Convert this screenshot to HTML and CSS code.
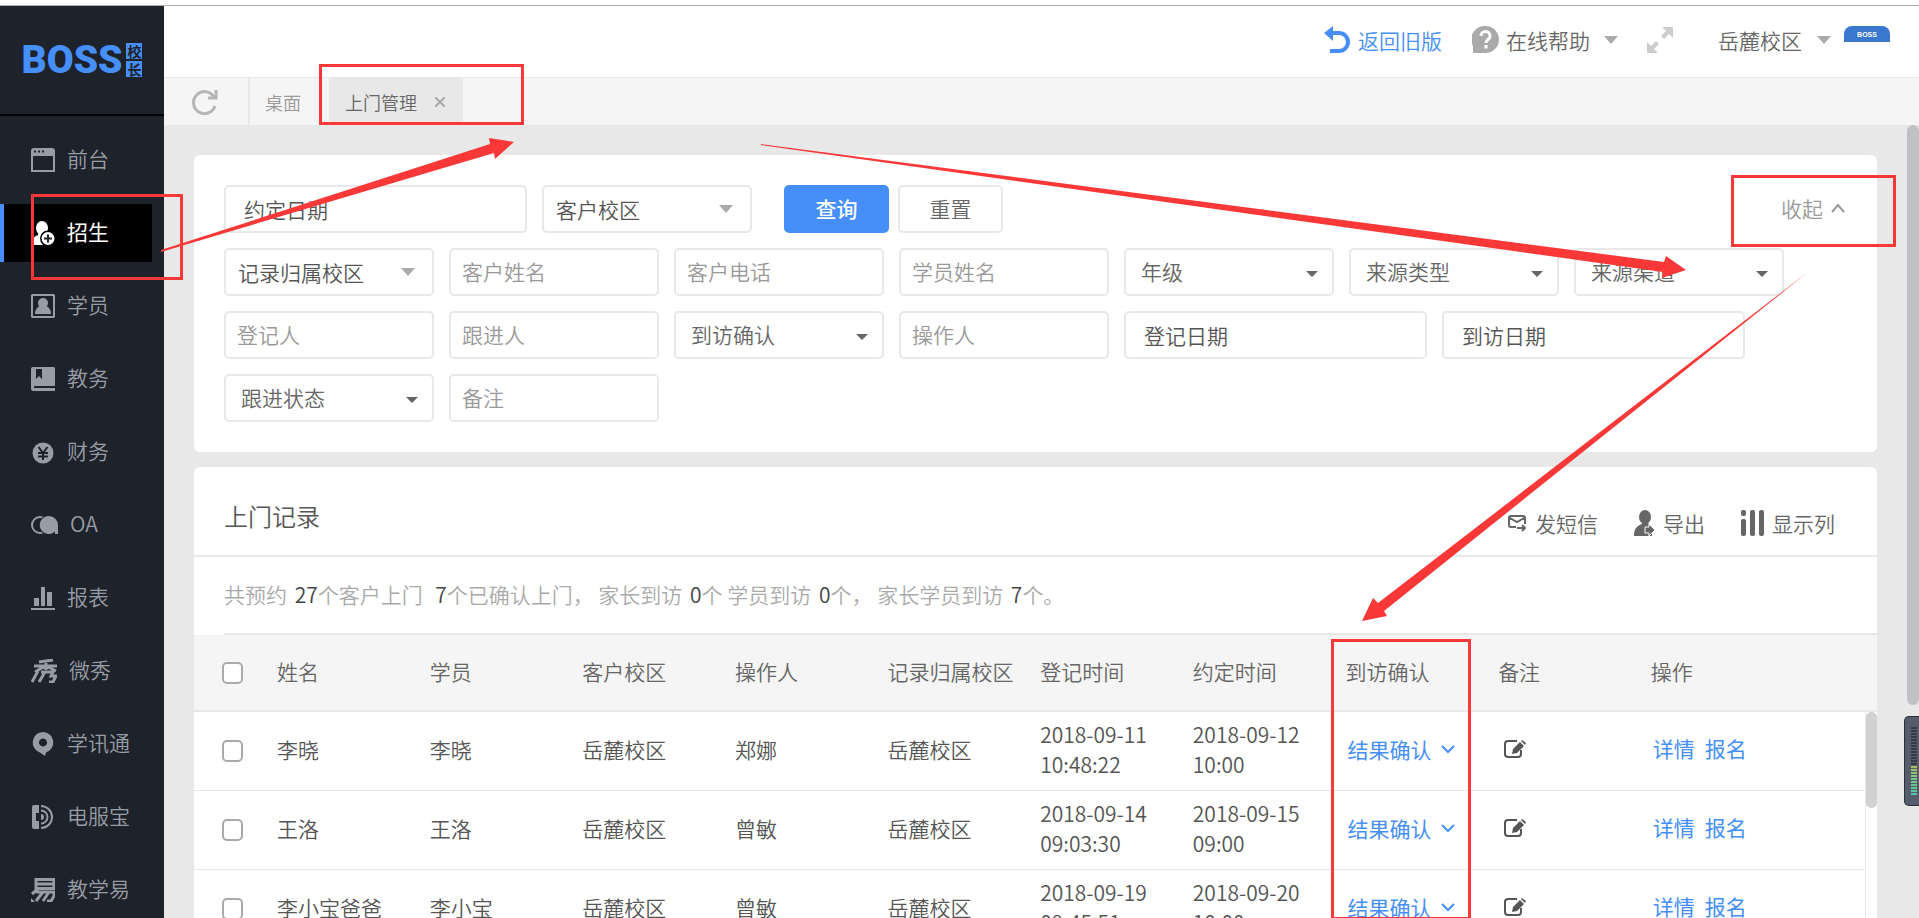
FILE: index.html
```
<!DOCTYPE html>
<html lang="zh-CN">
<head>
  <meta charset="UTF-8" />
  <meta name="viewport" content="width=device-width, initial-scale=1.0" />
  <title>BOSS校长 - 上门管理</title>
  <link rel="stylesheet" href="styles.css">
</head>
<body>
  <div class="app">
    <aside class="sidebar">
      <a class="logo" href="#">
        <span class="logo-name">BOSS</span>
        <span class="logo-sub"><i>校</i><i>长</i></span>
      </a>
      <nav class="menu">
        <a href="#"><svg width="24" height="24" viewBox="0 0 24 24"><path fill-rule="evenodd" d="M3 0h18a3 3 0 0 1 3 3v21H0V3a3 3 0 0 1 3-3zM2 8v14h20V8zM3 2.500h2v2H3zm4 0h2v2H7zm4 0h2v2h-2z"/></svg>前台</a>
        <a href="#" class="active"><svg width="24" height="24" viewBox="0 0 24 24"><ellipse cx="11" cy="7" rx="6" ry="7"/><path d="M7 12h8l2 3v9H0c0-5 2-8 7-10z"/><circle cx="17" cy="17.500" r="8" class="hole"/><circle cx="17" cy="17.500" r="6.500"/><path d="M17 13.500v8M13 17.500h8" class="cut"/></svg>招生</a>
        <a href="#"><svg width="24" height="24" viewBox="0 0 24 24"><path fill-rule="evenodd" d="M1 0h22l1 1v22l-1 1H1l-1-1V1zM2 2v20h20V2z"/><circle cx="12" cy="9" r="5"/><path d="M9 12h6c3 1 5 4 5 8H4c0-4 2-7 5-8z"/></svg>学员</a>
        <a href="#"><svg width="24" height="24" viewBox="0 0 24 24"><path fill-rule="evenodd" d="M2 0h21l1 1v18H3v2h21v3H2a2 2 0 0 1-2-2V2a2 2 0 0 1 2-2zM5 2v10l3-3 3 3V2z"/></svg>教务</a>
        <a href="#"><svg width="24" height="24" viewBox="0 0 24 24"><circle cx="12" cy="13" r="10.500"/><path d="M7.500 7l4.500 6 4.500-6M7 13h10M7 16.500h10M12 13v7" class="cut"/></svg>财务</a>
        <a href="#"><svg width="27" height="24" viewBox="0 0 27 24"><circle cx="9" cy="12" r="8" class="line"/><circle cx="17" cy="12" r="9.500" class="hole"/><path d="M18 3a9 9 0 0 1 9 9v9h-3v-2.500A9 9 0 1 1 18 3z"/></svg>OA</a>
        <a href="#"><svg width="24" height="24" viewBox="0 0 24 24"><path d="M3 12h5v8H3zM10 1h4v19h-4zM16 6h5v14h-5zM0 22h24v2H0z"/></svg>报表</a>
        <a href="#"><svg width="26" height="24" viewBox="0 0 26 24"><path d="M8 3l14-2M3 7h23M15 2v9M14 7L4 13M15 7l10 5M7 12L1 23M10 13h12l-2 4h5l-3 6h-4M14 13L8 23" class="line bold"/></svg>微秀</a>
        <a href="#"><svg width="24" height="24" viewBox="0 0 24 24"><path fill-rule="evenodd" d="M12 0a10.500 10.500 0 0 1 3 20.500L14 24l-5-3.500A10.500 10.500 0 0 1 12 0zm0 6.500a4 4 0 1 0 .01 0z"/></svg>学讯通</a>
        <a href="#"><svg width="24" height="24" viewBox="0 0 24 24"><path d="M3 0h5v8H5v8h3v8H3a2 2 0 0 1-2-2V2a2 2 0 0 1 2-2z"/><path d="M10 1a11 11 0 0 1 0 22M10 5.500a6.500 6.500 0 0 1 0 13" class="line"/><path d="M10 9a3 3 0 0 1 0 6z"/></svg>电服宝</a>
        <a href="#"><svg width="24" height="24" viewBox="0 0 24 24"><path d="M5 1.500h18v9H5zM5 6h17M8 10l-7 6M5 14h18v4l-3 5h-4M12 14L5 23M18 14l-6 9" class="line bold"/><path d="M0 20l4 4H0z"/></svg>教学易</a>
      </nav>
    </aside>

    <div class="main">
      <header class="topbar">
        <a class="back" href="#"><svg width="27" height="28" viewBox="0 0 27 28"><path d="M8 7h7a9 9 0 0 1 0 18H6" fill="none" stroke="currentColor" stroke-width="4"/><path d="M9 0v15L0 7z"/></svg>返回旧版</a>
        <button class="top-btn help"><svg width="27" height="28" viewBox="0 0 27 28"><path fill="#aaa" d="M13.500 0a13.500 13.500 0 0 1 0 27H1V20A13.500 13.500 0 0 1 13.500 0z"/><path d="M9 10c0-6 9-6 9 0 0 4-4 3-4 7M14 19v3.500" fill="none" stroke="#fff" stroke-width="3"/></svg>在线帮助<span class="caret"></span></button>
        <button class="top-btn expand" aria-label="全屏"><svg width="26" height="26" viewBox="0 0 26 26" fill="#ccc"><path d="M15 0h11v11l-4-4-5 5-3-3 5-5zM0 26V15l4 4 5-5 3 3-5 5 4 4z"/></svg></button>
        <button class="top-btn campus">岳麓校区<span class="caret"></span></button>
        <span class="avatar">BOSS</span>
      </header>

      <div class="tabs">
        <button class="refresh" aria-label="刷新"><svg width="26" height="26" viewBox="0 0 26 26" fill="none" stroke="#b5b5b5" stroke-width="3"><path d="M23 17a11 11 0 1 1-1-9"/><path d="M24 1v8h-8"/></svg></button>
        <a class="tab" href="#">桌面</a>
        <a class="tab current" href="#">上门管理<svg width="10" height="10" viewBox="0 0 10 10"><path d="M0 0l10 10M10 0L0 10" stroke="#aaa" stroke-width="2"/></svg></a>
      </div>

      <main class="content">
        <form class="card filters">
          <div class="filter-row">
            <input class="field date" type="text" value="约定日期" aria-label="约定日期">
            <span class="select soft"><select aria-label="客户校区"><option>客户校区</option></select></span>
            <button type="button" class="btn primary">查询</button>
            <button type="button" class="btn">重置</button>
            <button type="button" class="collapse">收起<svg width="14" height="10" viewBox="0 0 14 10"><path d="M1 9l6-7 6 7" fill="none" stroke="currentColor" stroke-width="2"/></svg></button>
          </div>
          <div class="filter-row">
            <span class="select soft"><select aria-label="记录归属校区"><option>记录归属校区</option></select></span>
            <input class="field" type="text" placeholder="客户姓名" aria-label="客户姓名">
            <input class="field" type="text" placeholder="客户电话" aria-label="客户电话">
            <input class="field" type="text" placeholder="学员姓名" aria-label="学员姓名">
            <span class="select"><select aria-label="年级"><option>年级</option></select></span>
            <span class="select"><select aria-label="来源类型"><option>来源类型</option></select></span>
            <span class="select"><select aria-label="来源渠道"><option>来源渠道</option></select></span>
          </div>
          <div class="filter-row">
            <input class="field" type="text" placeholder="登记人" aria-label="登记人">
            <input class="field" type="text" placeholder="跟进人" aria-label="跟进人">
            <span class="select"><select aria-label="到访确认"><option>到访确认</option></select></span>
            <input class="field" type="text" placeholder="操作人" aria-label="操作人">
            <input class="field date" type="text" value="登记日期" aria-label="登记日期">
            <input class="field date" type="text" value="到访日期" aria-label="到访日期">
          </div>
          <div class="filter-row">
            <span class="select"><select aria-label="跟进状态"><option>跟进状态</option></select></span>
            <input class="field" type="text" placeholder="备注" aria-label="备注">
          </div>
        </form>

        <section class="card records">
          <div class="records-head">
            <h2>上门记录</h2>
            <div class="tools">
              <button><svg width="19" height="20" viewBox="0 0 19 20" fill="none" stroke="currentColor" stroke-width="2"><path d="M8 14H3a2 2 0 0 1-2-2V5a2 2 0 0 1 2-2h12a2 2 0 0 1 2 2v6M2 5l7 4 7-4M9 15h8M14 12l3 3-3 3"/></svg>发短信</button>
              <button><svg width="21" height="26" viewBox="0 0 21 26"><ellipse cx="11" cy="7" rx="6" ry="7"/><path d="M8 12h6l1 3 3 2v9H0c0-6 2-10 8-12z"/><path d="M11 17h4v-3l6 6-6 6v-3h-4z" stroke="#fff"/></svg>导出</button>
              <button><svg width="23" height="26" viewBox="0 0 23 26"><rect width="5" height="6" rx="2"/><rect y="9" width="5" height="17" rx="2"/><rect x="9" width="5" height="26" rx="2"/><rect x="18" width="5" height="26" rx="2"/></svg>显示列</button>
            </div>
          </div>
          <p class="summary">共预约 <b>27</b>个客户上门&nbsp; <b>7</b>个已确认上门， 家长到访 <b>0</b>个 学员到访 <b>0</b>个， 家长学员到访 <b>7</b>个。</p>
          <div class="table-wrap">
            <table>
              <thead>
                <tr>
                  <th class="check"><input type="checkbox" aria-label="全选"></th>
                  <th>姓名</th><th>学员</th><th>客户校区</th><th>操作人</th><th>记录归属校区</th>
                  <th>登记时间</th><th>约定时间</th><th>到访确认</th><th>备注</th><th class="ops">操作</th>
                </tr>
              </thead>
              <tbody id="rows"></tbody>
            </table>
            <div class="inner-scroll"><span></span></div>
          </div>
        </section>
        <div class="page-scroll"></div>
      </main>
    </div>
  </div>

  <div class="meter"><span class="idle"></span><span class="level"></span></div>

  <div class="mark mark-menu"></div>
  <div class="mark mark-tab"></div>
  <div class="mark mark-collapse"></div>
  <div class="mark mark-confirm"></div>
  <svg class="arrows" width="1919" height="918" viewBox="0 0 1919 918" fill="#fb3838">
    <path d="M161 250L490 144L489 138L514 142L495 159L494 153L161 252Z"/>
    <path d="M761 144L1664 262L1666 256L1686 270L1662 278L1663 272L761 145Z"/>
    <path d="M1808 272L1384 611L1387 616L1362 621L1373 598L1378 603Z"/>
  </svg>

  <script>
    const visits = [
      ['李晓', '李晓', '郑娜', '2018-09-11', '10:48:22', '2018-09-12', '10:00'],
      ['王洛', '王洛', '曾敏', '2018-09-14', '09:03:30', '2018-09-15', '09:00'],
      ['李小宝爸爸', '李小宝', '曾敏', '2018-09-19', '09:45:51', '2018-09-20', '10:00']
    ];

    document.getElementById('rows').innerHTML = visits.map(v => `
      <tr>
        <td class="check"><input type="checkbox" aria-label="选择${v[0]}"></td>
        <td>${v[0]}</td><td>${v[1]}</td><td>岳麓校区</td><td>${v[2]}</td><td>岳麓校区</td>
        <td>${v[3]}<br>${v[4]}</td><td>${v[5]}<br>${v[6]}</td>
        <td><button class="confirm">结果确认<svg width="14" height="9" viewBox="0 0 14 9"><path d="M1 1l6 6 6-6" fill="none" stroke="currentColor" stroke-width="2"/></svg></button></td>
        <td><button class="edit" aria-label="编辑备注"><svg width="22" height="20" viewBox="0 0 22 20"><path d="M13 2H4a3 3 0 0 0-3 3v10a3 3 0 0 0 3 3h10a3 3 0 0 0 3-3v-4" fill="none" stroke="currentColor" stroke-width="2"/><path d="M8 15l1-5 7-7 4 4-7 7zM17 2l1-1 4 3-1 2z"/></svg></button></td>
        <td class="ops"><a href="#">详情</a><a href="#">报名</a></td>
      </tr>`).join('');
  </script>
</body>
</html>
```
FILE: styles.css
```
* {
  box-sizing: border-box;
}

body {
  margin: 0;
  height: 100vh;
  overflow: hidden;
  background: #fff;
  color: #555;
  font-family: "Noto Sans CJK SC", sans-serif;
  font-size: 21px;
  font-weight: 350;
  line-height: 30px;
}

button, input, select {
  font: inherit;
  color: inherit;
}

button {
  display: flex;
  align-items: center;
  padding: 0;
  border: 0;
  background: none;
}

a {
  color: inherit;
  text-decoration: none;
}

svg {
  display: block;
  flex: none;
}

svg:not([fill]) {
  fill: currentColor;
}

.app {
  display: flex;
  height: 100vh;
  margin-top: 5px;
  border-top: 1px solid #b0b0b0;
}

/* sidebar */
.sidebar {
  width: 164px;
  flex: none;
  background: #1e222a;
  color: #989ca5;
}

.logo {
  display: flex;
  align-items: center;
  justify-content: center;
  gap: 4px;
  height: 110px;
  border-bottom: 2px solid #000;
  color: #468ff9;
}

.logo-name {
  font: 900 39px/34px Roboto, sans-serif;
}

.logo-sub {
  display: grid;
  gap: 2px;
}

.logo-sub i {
  width: 16px;
  height: 16px;
  background: #468ff9;
  color: #1e222a;
  font: bold 14px/16px "Noto Sans CJK SC", sans-serif;
  text-align: center;
}

.menu {
  display: grid;
  gap: 15px;
  padding-top: 15px;
}

.menu a {
  display: flex;
  align-items: center;
  gap: 12px;
  width: 152px;
  height: 58px;
  padding: 0 0 5px 27px;
  border-left: 4px solid transparent;
}

.menu svg {
  margin-top: 5px;
}

.menu .active {
  background: #000;
  border-color: #468ff9;
  color: #fff;
  font-weight: 400;
}

.menu .line {
  fill: none;
  stroke: currentColor;
  stroke-width: 2;
}

.menu .bold {
  stroke-width: 3;
}

.menu .cut {
  fill: none;
  stroke: #1e222a;
  stroke-width: 2;
}

.menu .hole {
  fill: #1e222a;
}

.menu .active .hole {
  fill: #000;
}

/* top bar */
.main {
  display: flex;
  flex-direction: column;
  flex: 1;
  min-width: 0;
}

.topbar {
  display: flex;
  flex: none;
  align-items: center;
  justify-content: flex-end;
  height: 72px;
  padding: 0 29px 3px 0;
  border-bottom: 1px solid #e8e8e8;
  color: #666;
}

.back {
  display: flex;
  align-items: center;
  gap: 7px;
  margin-right: 30px;
  color: #468ff9;
}

.top-btn {
  gap: 7px;
}

.caret {
  margin-left: 7px;
  border: 7px solid transparent;
  border-top: 8px solid #aaa;
  border-bottom: 0;
}

.campus .caret {
  margin-left: 8px;
}

.expand {
  margin: 0 45px 0 29px;
}

.avatar {
  align-self: flex-start;
  width: 46px;
  height: 16px;
  margin: 20px 0 0 13px;
  border-radius: 8px 8px 0 0;
  background: #3a78d0;
  color: #fff;
  font: bold 7px/18px "Liberation Sans", sans-serif;
  text-align: center;
}

.tabs {
  display: flex;
  flex: none;
  height: 47px;
  background: #f5f5f5;
  color: #999;
  font-size: 18px;
}

.refresh {
  width: 86px;
  padding-left: 28px;
  border-right: 2px solid #e8e8e8;
}

.tab {
  display: flex;
  align-items: center;
  height: 47px;
  padding: 0 15px;
}

.current {
  gap: 18px;
  margin-left: 13px;
  padding: 0 18px 0 16px;
  background: #e8e8e8;
  color: #666;
}

/* content */
.content {
  position: relative;
  flex: 1;
  padding: 30px 42px 0 30px;
  background: #e8e8e8;
}

.card {
  border-radius: 6px;
  background: #fff;
}

.filters {
  display: grid;
  gap: 15px;
  padding: 30px;
  margin-bottom: 15px;
}

.filter-row {
  display: flex;
  gap: 15px;
}

.field, .select {
  width: 210px;
  height: 48px;
  border: 2px solid #e8e8e8;
  border-radius: 5px;
  background: #fff;
}

.field {
  padding: 0 11px 3px;
}

.field::placeholder {
  color: #999;
  opacity: 1;
}

.date {
  width: 303px;
  padding: 0 18px;
}

.select {
  display: grid;
  align-items: center;
  color: #666;
}

.select select, .select::after {
  grid-area: 1 / 1;
}

.select select {
  appearance: none;
  width: 100%;
  height: 100%;
  padding: 0 0 3px 15px;
  border: 0;
  background: none;
}

.select::after {
  content: "";
  justify-self: end;
  margin: 4px 14px 0 0;
  border: 6px solid transparent;
  border-top-color: #666;
  border-bottom: 0;
  pointer-events: none;
}

.soft {
  color: #555;
}

.soft select {
  padding: 0 0 0 12px;
}

.soft::after {
  margin: 0 17px 0 0;
  border-width: 8px 7px 0;
  border-top-color: #aaa;
}

.btn {
  justify-content: center;
  width: 105px;
  height: 48px;
  padding-bottom: 3px;
  border: 2px solid #e8e8e8;
  border-radius: 5px;
  color: #666;
}

.primary {
  margin: 0 -6px 0 17px;
  border-color: #468ff9;
  background: #468ff9;
  color: #fff;
  font-weight: 500;
}

.collapse {
  gap: 8px;
  margin-left: auto;
  padding: 0 2px 2px 0;
  color: #999;
}

/* records */
.records-head {
  display: flex;
  justify-content: space-between;
  height: 90px;
  padding: 0 42px 0 30px;
  border-bottom: 2px solid #e8e8e8;
}

.records-head h2 {
  margin: 0;
  font-size: 24px;
  font-weight: 350;
  line-height: 98px;
}

.tools {
  display: flex;
  gap: 36px;
  padding-top: 24px;
  color: #666;
}

.tools button {
  gap: 8px;
}

.summary {
  height: 78px;
  margin: 0 0 0 30px;
  border-bottom: 2px solid #e8e8e8;
  color: #aaa;
  line-height: 74px;
}

.summary b {
  margin-left: 3px;
  color: #444;
  font-weight: 350;
}

.table-wrap {
  position: relative;
}

table {
  width: 100%;
  border-collapse: collapse;
  table-layout: fixed;
}

th, td {
  width: 9.07%;
  padding: 0 0 3px 15px;
  text-align: left;
  white-space: nowrap;
}

th {
  height: 76px;
  border-bottom: 2px solid #e8e8e8;
  background: #f5f5f5;
  color: #666;
  font-weight: 350;
}

td {
  height: 79px;
  border-bottom: 1px solid #e8e8e8;
}

th.check, td.check {
  width: 68px;
  padding: 0 0 0 28px;
}

th.ops {
  width: auto;
}

.check input {
  appearance: none;
  display: block;
  width: 21px;
  height: 22px;
  margin: 0;
  border: 2px solid #aaa;
  border-radius: 5px;
  background: #fff;
}

.confirm {
  gap: 10px;
  margin-left: 2px;
  color: #468ff9;
  font-weight: 400;
}

.edit {
  margin-left: 6px;
}

td.ops {
  padding-bottom: 6px;
}

.ops a {
  margin: 0 8px 0 2px;
  color: #468ff9;
  font-weight: 400;
}

.inner-scroll {
  position: absolute;
  top: 77px;
  right: 0;
  bottom: 0;
  width: 12px;
  border-left: 1px solid #e8e8e8;
  background: #fff;
}

.inner-scroll span {
  display: block;
  height: 96px;
  border-radius: 5px;
  background: #d0d1d3;
}

.page-scroll {
  position: absolute;
  top: 0;
  right: 0;
  width: 12px;
  height: 580px;
  border-radius: 6px;
  background: #c0c1c5;
}

/* level meter docked to the window edge */
.meter {
  position: absolute;
  top: 716px;
  right: 0;
  display: grid;
  align-content: center;
  width: 15px;
  height: 90px;
  padding-left: 6px;
  border: 1px solid #2b303c;
  border-right: 0;
  border-radius: 5px 0 0 5px;
  background: #555c6c;
}

.meter span {
  width: 6px;
  height: 39px;
  background: repeating-linear-gradient(#353a47 0 2px, #555c6c 2px 3px);
}

.meter .level {
  height: 30px;
  background: repeating-linear-gradient(transparent 0 2px, #555c6c 2px 3px), linear-gradient(#a8c060, #48c8b0);
}

/* annotations */
.mark {
  position: absolute;
  border: 3px solid #fb3838;
}

.mark-menu {
  left: 31px;
  top: 194px;
  width: 152px;
  height: 86px;
}

.mark-tab {
  left: 319px;
  top: 64px;
  width: 205px;
  height: 61px;
}

.mark-collapse {
  right: 23px;
  top: 175px;
  width: 165px;
  height: 72px;
}

.mark-confirm {
  left: 1331px;
  top: 639px;
  width: 140px;
  height: 281px;
}

.arrows {
  position: absolute;
  left: 0;
  top: 0;
  pointer-events: none;
}
```
